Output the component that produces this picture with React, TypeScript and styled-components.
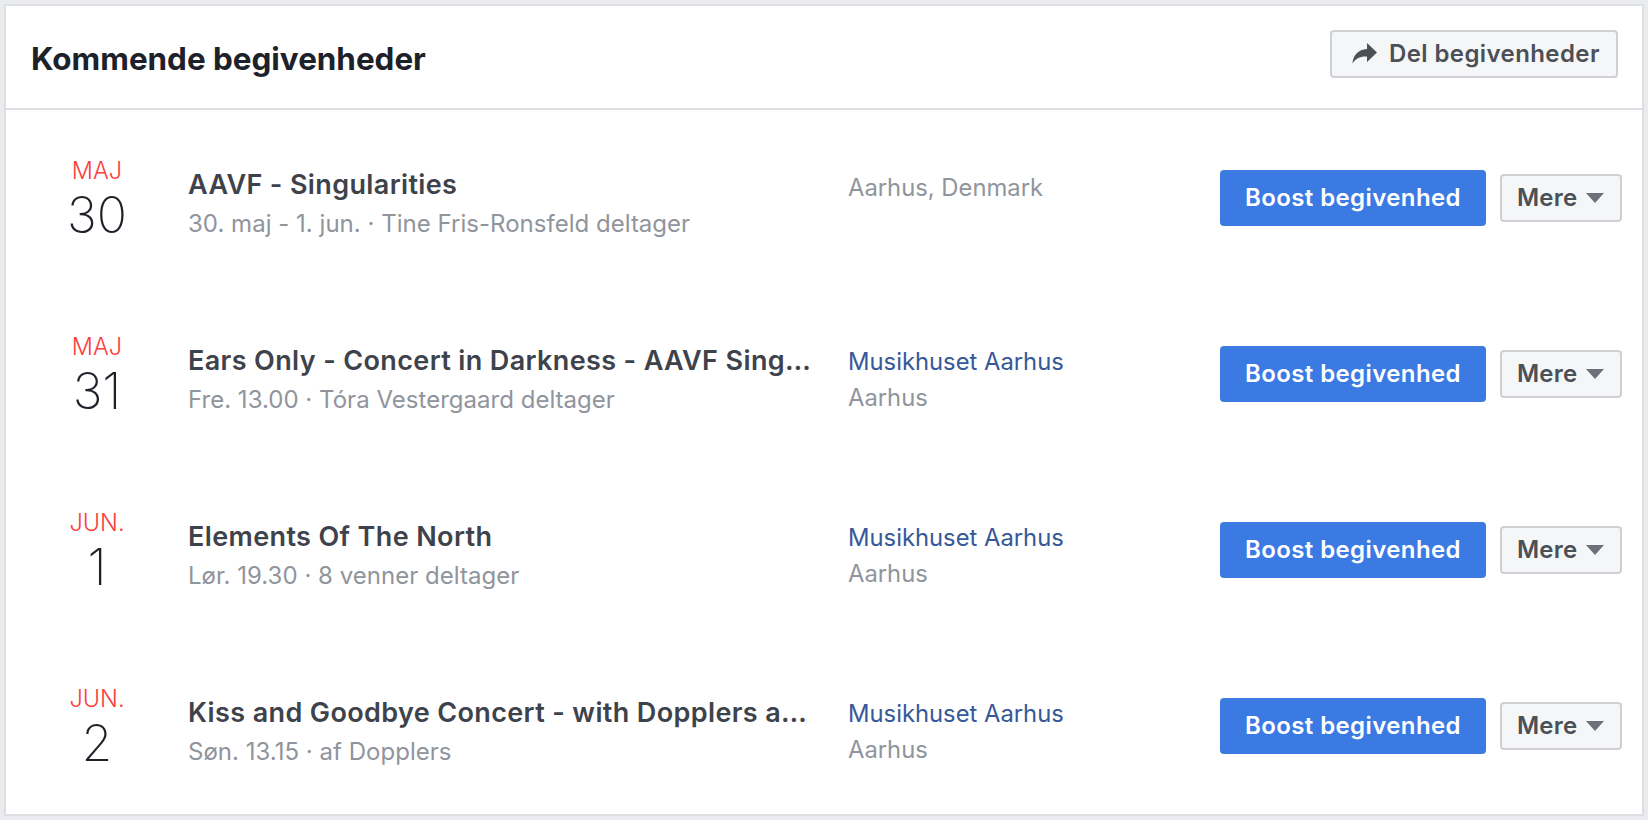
import React from 'react'
import styled, { createGlobalStyle } from 'styled-components'

const GlobalStyle = createGlobalStyle`
  html, body {
    margin: 0;
    padding: 0;
    background: #e9ebee;
  }
  * {
    box-sizing: border-box;
  }
`

type EventItem = {
  month: string
  day: string
  title: string
  meta: string
  venue?: string
  city: string
}

const events: EventItem[] = [
  { month: 'MAJ', day: '30', title: 'AAVF - Singularities', meta: '30. maj - 1. jun. · Tine Fris-Ronsfeld deltager', city: 'Aarhus, Denmark' },
  { month: 'MAJ', day: '31', title: 'Ears Only - Concert in Darkness - AAVF Singularities', meta: 'Fre. 13.00 · Tóra Vestergaard deltager', venue: 'Musikhuset Aarhus', city: 'Aarhus' },
  { month: 'JUN.', day: '1', title: 'Elements Of The North', meta: 'Lør. 19.30 · 8 venner deltager', venue: 'Musikhuset Aarhus', city: 'Aarhus' },
  { month: 'JUN.', day: '2', title: 'Kiss and Goodbye Concert - with Dopplers and friends', meta: 'Søn. 13.15 · af Dopplers', venue: 'Musikhuset Aarhus', city: 'Aarhus' },
]

export default function App() {
  return (
    <Page>
      <GlobalStyle />
      <Card>
        <Header>
          <Heading>Kommende begivenheder</Heading>
          <ShareButton>
            <svg width="25" height="21" viewBox="0 0 25 21" fill="#4b4f56">
              <path d="M15 0 L25 9.5 L15 19 L15 13.5 C8.5 13 3.5 15.5 0.5 20.5 C1 12.5 6 6.5 15 6 Z" />
            </svg>
            Del begivenheder
          </ShareButton>
        </Header>
        {events.map((ev) => (
          <Row key={ev.title}>
            <DateCol>
              <Month>{ev.month}</Month>
              <Day>{ev.day}</Day>
            </DateCol>
            <Info>
              <Title>{ev.title}</Title>
              <Meta>{ev.meta}</Meta>
            </Info>
            <Place $single={!ev.venue}>
              {ev.venue && <Venue>{ev.venue}</Venue>}
              <City>{ev.city}</City>
            </Place>
            <Actions>
              <BoostButton>Boost begivenhed</BoostButton>
              <MoreButton>
                Mere
                <Caret />
              </MoreButton>
            </Actions>
          </Row>
        ))}
      </Card>
    </Page>
  )
}

const Page = styled.div`
  width: 1648px;
  height: 820px;
  padding: 4px;
  background: #e9ebee;
  font-family: Inter, "Liberation Sans", sans-serif;
`

const Card = styled.div`
  width: 1640px;
  height: 812px;
  background: #ffffff;
  border: 2px solid #dddfe2;
`

const Header = styled.div`
  height: 104px;
  padding: 24px 24px 0 25px;
  display: flex;
  justify-content: space-between;
  align-items: flex-start;
  border-bottom: 2px solid #dddfe2;
`

const Heading = styled.h1`
  margin: 11px 0 0;
  font-size: 31.4px;
  line-height: 36px;
  font-weight: 700;
  color: #1d2129;
`

const ShareButton = styled.button`
  width: 288px;
  height: 48px;
  padding: 0 0 2px 20px;
  display: flex;
  align-items: center;
  gap: 12px;
  font-family: inherit;
  font-size: 24px;
  font-weight: 600;
  letter-spacing: 0.4px;
  color: #4b4f56;
  background: #f5f6f7;
  border: 2px solid #ced0d4;
  border-radius: 4px;
`

const Row = styled.div`
  height: 176px;
  padding-right: 20px;
  display: grid;
  grid-template-columns: 182px 660px 372px auto;
  align-items: start;
`

const DateCol = styled.div`
  padding-top: 48px;
  display: flex;
  flex-direction: column;
  align-items: center;
`

const Month = styled.div`
  font-size: 23.5px;
  line-height: 26px;
  font-weight: 300;
  color: #fa3e3e;
`

const Day = styled.div`
  margin-top: 4px;
  font-size: 50px;
  line-height: 54px;
  font-weight: 200;
  color: #1d2129;
`

const Info = styled.div`
  min-width: 0;
  padding: 57px 34px 0 0;
`

const Title = styled.div`
  font-size: 27px;
  line-height: 36px;
  font-weight: 600;
  letter-spacing: 0.37px;
  color: #3e434b;
  white-space: nowrap;
  overflow: hidden;
  text-overflow: ellipsis;
`

const Meta = styled.div`
  margin-top: 5px;
  font-size: 24px;
  line-height: 32px;
  letter-spacing: 0.02px;
  color: #90949c;
`

const Place = styled.div<{ $single: boolean }>`
  padding-top: ${(p) => (p.$single ? '60px' : '58px')};
  font-size: 23.8px;
  line-height: 36px;
`

const Venue = styled.div`
  color: #365899;
`

const City = styled.div`
  color: #90949c;
`

const Actions = styled.div`
  height: 100%;
  display: flex;
  align-items: center;
  gap: 14px;
`

const BoostButton = styled.button`
  width: 266px;
  height: 56px;
  padding: 0 0 2px;
  font-family: inherit;
  font-size: 24px;
  font-weight: 600;
  letter-spacing: 0.4px;
  color: #ffffff;
  background: #3b7ae3;
  border: none;
  border-radius: 4px;
`

const MoreButton = styled.button`
  width: 122px;
  height: 48px;
  padding: 0 0 2px 15px;
  display: flex;
  align-items: center;
  gap: 9px;
  font-family: inherit;
  font-size: 24px;
  font-weight: 600;
  letter-spacing: 0.2px;
  color: #4b4f56;
  background: #f5f6f7;
  border: 2px solid #ced0d4;
  border-radius: 4px;
`

const Caret = styled.span`
  width: 0;
  height: 0;
  margin-top: 2px;
  border-left: 9px solid transparent;
  border-right: 9px solid transparent;
  border-top: 10px solid #6d7079;
`
